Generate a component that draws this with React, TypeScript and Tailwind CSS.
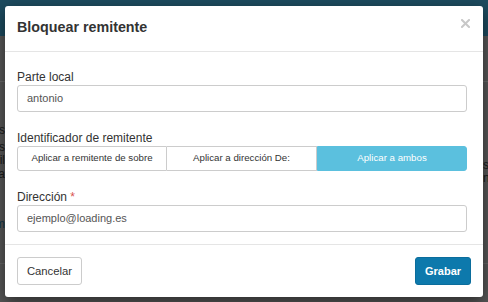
import React from "react";

export default function App() {
  return (
    <div
      className="relative w-[488px] h-[302px] overflow-hidden bg-[#575757]"
      style={{ fontFamily: '"Liberation Sans", Arial, sans-serif' }}
    >
      {/* dimmed page behind the modal */}
      <div className="h-[36px] bg-[#1d4b5f]" />
      <div className="mt-[45px] h-px bg-[#6a6a6a]" />
      <div className="flex justify-between text-[12px] leading-[13px] text-[#1a1a1a]">
        <div className="w-[5px] overflow-hidden mt-[42px] flex flex-col items-end whitespace-nowrap">
          <span>ns</span>
          <span className="mt-[4px]">s</span>
          <span>il</span>
          <span className="mt-[1px]">a</span>
          <span className="mt-[37px] text-[#12364a]">m</span>
        </div>
        <div className="w-[5px] overflow-hidden mt-[77px] flex flex-col whitespace-nowrap">
          <span>s</span>
          <span>n</span>
        </div>
      </div>
      <div className="absolute left-0 right-0 top-[263px] h-px bg-[#666666]" />

      {/* modal */}
      <div className="absolute left-[5px] top-[6px] w-[478px] h-[291px] flex flex-col bg-white rounded-[3px] shadow-[0_5px_15px_rgba(0,0,0,0.5)]">
        <div className="h-[46px] shrink-0 flex items-start justify-between border-b border-[#e5e5e5] pl-[12px] pr-[13px]">
          <h1 className="mt-[13px] text-[14.3px] leading-[17px] font-bold text-[#333333]">
            Bloquear remitente
          </h1>
          <svg
            className="mt-[13px]"
            width="9"
            height="9"
            viewBox="0 0 9 9"
            stroke="#c8c8c8"
            strokeWidth="2"
            strokeLinecap="square"
          >
            <path d="M1 1 L8 8 M8 1 L1 8" />
          </svg>
        </div>

        <div className="flex flex-col pl-[12px] pr-[16px] pt-[18px] pb-[12px]">
          <label className="text-[12px] leading-[15px] text-[#333333]">Parte local</label>
          <div className="h-[27px] flex items-center rounded-[3px] border border-[#cccccc] px-[9px] text-[11px] text-[#555555]">
            antonio
          </div>

          <label className="mt-[19px] text-[12px] leading-[15px] text-[#333333]">
            Identificador de remitente
          </label>
          <div className="grid grid-cols-3 h-[25px] text-[9.7px]">
            <div className="flex items-center justify-center rounded-l-[3px] border border-[#cccccc] text-[#333333]">
              Aplicar a remitente de sobre
            </div>
            <div className="flex items-center justify-center border-y border-r border-[#cccccc] text-[#333333]">
              Aplicar a dirección De:
            </div>
            <div className="flex items-center justify-center rounded-r-[3px] border border-[#5bc0de] bg-[#5bc0de] text-white">
              Aplicar a ambos
            </div>
          </div>

          <label className="mt-[19px] text-[12px] leading-[15px] text-[#333333]">
            Dirección <span className="text-[#d9534f]">*</span>
          </label>
          <div className="h-[27px] flex items-center rounded-[3px] border border-[#cccccc] px-[9px] text-[11px] text-[#555555]">
            ejemplo@loading.es
          </div>
        </div>

        <div className="flex-1 flex items-center justify-between border-t border-[#e5e5e5] px-[12px]">
          <button className="w-[65px] h-[28px] rounded-[3px] border border-[#cccccc] bg-white text-[11.3px] text-[#333333]">
            Cancelar
          </button>
          <button className="w-[56px] h-[28px] rounded-[3px] border border-[#0b6d9c] bg-[#0d79ac] text-[11px] font-bold text-white">
            Grabar
          </button>
        </div>
      </div>
    </div>
  );
}
